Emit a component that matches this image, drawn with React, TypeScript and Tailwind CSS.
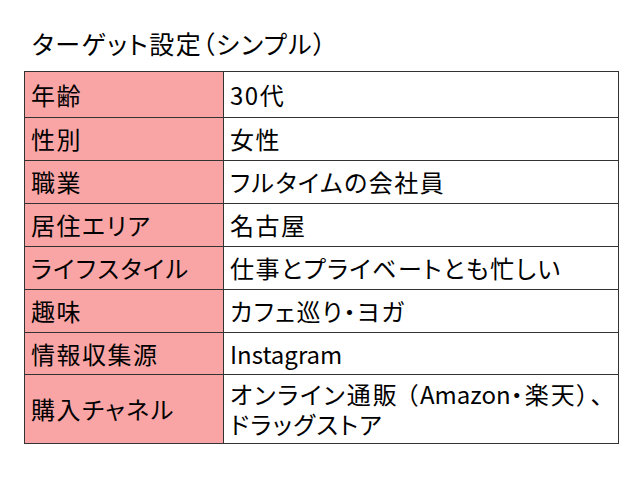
const rows: { label: string; value: React.ReactNode; h: string }[] = [
  { label: "年齢", value: "30代", h: "h-[46px]" },
  { label: "性別", value: "女性", h: "h-[43px]" },
  { label: "職業", value: "フルタイムの会社員", h: "h-[43px]" },
  { label: "居住エリア", value: "名古屋", h: "h-[43px]" },
  { label: "ライフスタイル", value: "仕事とプライベートとも忙しい", h: "h-[43px]" },
  { label: "趣味", value: "カフェ巡り・ヨガ", h: "h-[43px]" },
  { label: "情報収集源", value: <span className="tracking-normal">Instagram</span>, h: "h-[42px]" },
  {
    label: "購入チャネル",
    value: (
      <>
        <span className="tracking-[2px]">オンライン通販 （</span>
        <span className="tracking-normal">Amazon</span>
        <span className="tracking-[2px]">・楽天）、</span>
        <br />
        ドラッグストア
      </>
    ),
    h: "h-[69px]",
  },
]

export default function App() {
  return (
    <div
      className="w-[640px] h-[480px] bg-white pl-[24px] pt-[28px] text-black"
      style={{ fontFamily: '"Noto Sans CJK JP", "Liberation Sans", sans-serif', fontFeatureSettings: '"palt"' }}
    >
      <h1 className="pl-[8px] text-[25px] leading-[30px] h-[30px] tracking-[1.5px]">ターゲット設定（シンプル）</h1>
      <table className="mt-[13px] w-[595px] border-collapse text-[24px] tracking-[1.5px]">
        <tbody>
          {rows.map((r) => (
            <tr key={r.label} className={r.h}>
              <td className="w-[199px] bg-[#f9a5a6] border-[1.5px] border-[#333] pl-[6px] leading-[30px] align-middle">
                {r.label}
              </td>
              <td className="border-[1.5px] border-[#333] pl-[6px] leading-[30px] align-middle whitespace-nowrap">
                {r.value}
              </td>
            </tr>
          ))}
        </tbody>
      </table>
    </div>
  )
}
